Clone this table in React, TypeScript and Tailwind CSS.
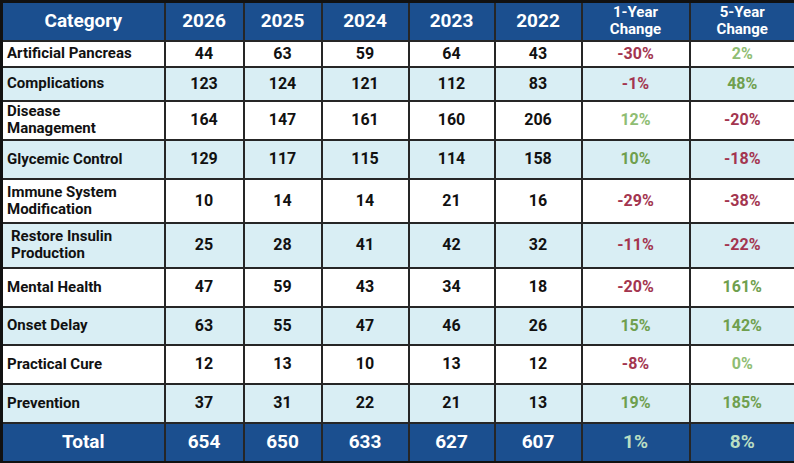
import React from "react";

type Row = {
  name: string[];
  values: number[];
  one: number;
  five: number;
  pad?: boolean;
  h: string;
};

// Row heights follow the picture (rows are not uniform)
const rows: Row[] = [
  { name: ["Artificial Pancreas"], values: [44, 63, 59, 64, 43], one: -30, five: 2, h: "h-[24px]" },
  { name: ["Complications"], values: [123, 124, 121, 112, 83], one: -1, five: 48, h: "h-[34px]" },
  { name: ["Disease", "Management"], values: [164, 147, 161, 160, 206], one: 12, five: -20, h: "h-[39px]" },
  { name: ["Glycemic Control"], values: [129, 117, 115, 114, 158], one: 10, five: -18, h: "h-[39px]" },
  { name: ["Immune System", "Modification"], values: [10, 14, 14, 21, 16], one: -29, five: -38, h: "h-[44px]" },
  { name: ["Restore Insulin", "Production"], values: [25, 28, 41, 42, 32], one: -11, five: -22, pad: true, h: "h-[45px]" },
  { name: ["Mental Health"], values: [47, 59, 43, 34, 18], one: -20, five: 161, h: "h-[39px]" },
  { name: ["Onset Delay"], values: [63, 55, 47, 46, 26], one: 15, five: 142, h: "h-[38px]" },
  { name: ["Practical Cure"], values: [12, 13, 10, 13, 12], one: -8, five: 0, h: "h-[39px]" },
  { name: ["Prevention"], values: [37, 31, 22, 21, 13], one: 19, five: 185, h: "h-[39px]" },
];

function pctColor(v: number): string {
  if (v < 0) return "text-[#a3354f]";
  if (v <= 12) return v === 10 ? "text-[#6f9f4e]" : "text-[#8fbd73]";
  return "text-[#6f9f4e]";
}

const cell = "p-0 border-2 border-[#262626] text-center align-middle";

export default function App() {
  return (
    <div className="w-[794px] h-[463px] bg-white" style={{ fontFamily: "Roboto, 'Liberation Sans', sans-serif" }}>
      <table className="w-[794px] table-fixed border-collapse border-[3px] border-[#111]">
        <colgroup>
          <col className="w-[163px]" />
          <col className="w-[79px]" />
          <col className="w-[78px]" />
          <col className="w-[87px]" />
          <col className="w-[86px]" />
          <col className="w-[87px]" />
          <col className="w-[108px]" />
          <col className="w-[106px]" />
        </colgroup>
        <thead>
          <tr className="h-[39px] bg-[#1b4f8f] text-white font-bold">
            <th className={`${cell} text-[19px]`}>Category</th>
            {[2026, 2025, 2024, 2023, 2022].map((y) => (
              <th key={y} className={`${cell} text-[19px]`}>{y}</th>
            ))}
            <th className={`${cell} text-[15px] leading-[17px]`}>1-Year<br />Change</th>
            <th className={`${cell} text-[15px] leading-[17px]`}>5-Year<br />Change</th>
          </tr>
        </thead>
        <tbody>
          {rows.map((r, i) => (
            <tr key={r.name.join(" ")} className={`${r.h} ${i % 2 === 1 ? "bg-[#d9eef4]" : "bg-white"} font-bold text-[#111]`}>
              <td className={`${cell} text-left text-[15px] leading-[17px] ${r.pad ? "pl-[8px]" : "pl-[4px]"} pr-1`}>
                {r.name.map((l, k) => (
                  <div key={k}>{l}</div>
                ))}
              </td>
              {r.values.map((v, j) => (
                <td key={j} className={`${cell} text-[16px]`}>{v}</td>
              ))}
              <td className={`${cell} text-[16px] ${pctColor(r.one)}`}>{r.one}%</td>
              <td className={`${cell} text-[16px] ${pctColor(r.five)}`}>{r.five}%</td>
            </tr>
          ))}
          <tr className="h-[40px] bg-[#1b4f8f] font-bold">
            <td className={`${cell} text-white text-[19px]`}>Total</td>
            {[654, 650, 633, 627, 607].map((v) => (
              <td key={v} className={`${cell} text-white text-[19px]`}>{v}</td>
            ))}
            <td className={`${cell} text-[#b9dec3] text-[19px]`}>1%</td>
            <td className={`${cell} text-[#b9dec3] text-[19px]`}>8%</td>
          </tr>
        </tbody>
      </table>
    </div>
  );
}
